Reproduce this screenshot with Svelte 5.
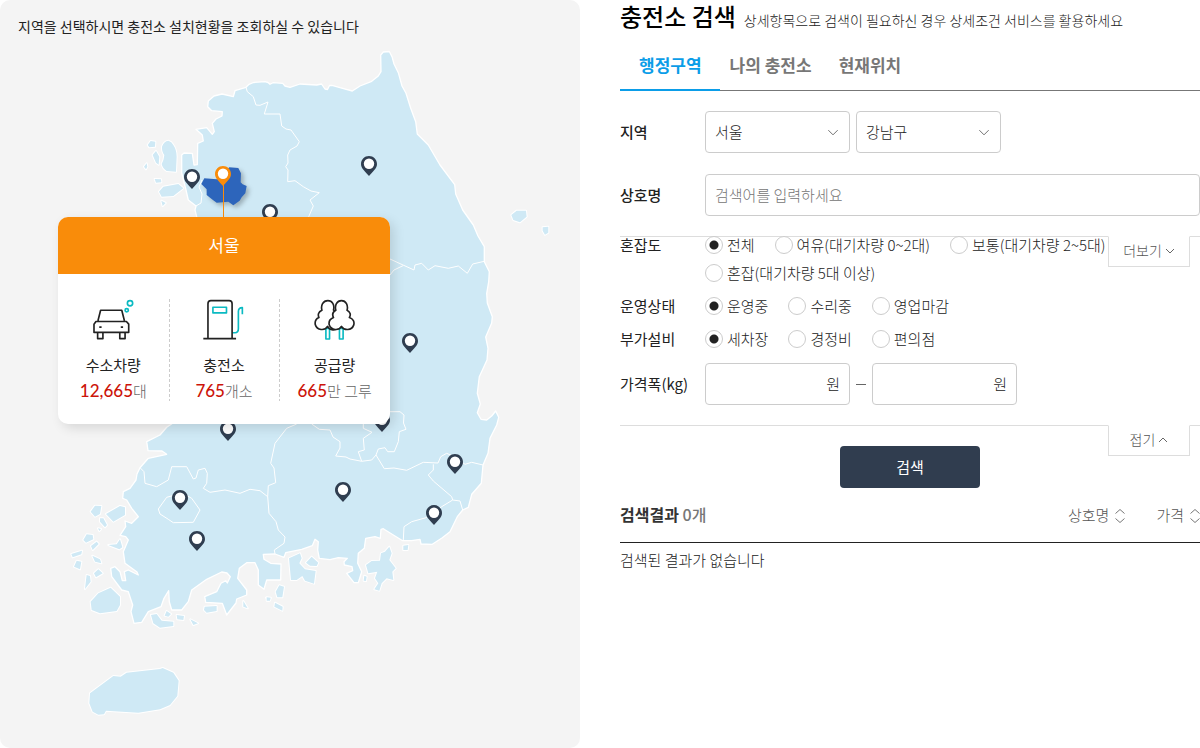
<script>
  const pins = [
    { name: '인천', x: 192, y: 169 },
    { name: '경기', x: 270, y: 204 },
    { name: '강원', x: 369, y: 156 },
    { name: '경북', x: 410, y: 333 },
    { name: '대구', x: 382, y: 412 },
    { name: '전북', x: 228, y: 421 },
    { name: '울산', x: 455, y: 454 },
    { name: '경남', x: 343, y: 482 },
    { name: '광주', x: 180, y: 490 },
    { name: '부산', x: 434, y: 505 },
    { name: '전남', x: 197, y: 531 },
    { name: '서울', x: 223, y: 166, active: true }
  ];

  const groups = [
    { key: 'crowd', label: '혼잡도', options: ['전체', '여유(대기차량 0~2대)', '보통(대기차량 2~5대)', '혼잡(대기차량 5대 이상)'] },
    { key: 'state', label: '운영상태', options: ['운영중', '수리중', '영업마감'] },
    { key: 'extra', label: '부가설비', options: ['세차장', '경정비', '편의점'] }
  ];
  let picked = $state({ crowd: '전체', state: '운영중', extra: '세차장' });

  const tabs = ['행정구역', '나의 충전소', '현재위치'];
  let tab = $state('행정구역');
</script>

{#snippet chevron(up)}
  <svg class="chev" viewBox="0 0 10 6" aria-hidden="true"><path d={up ? 'M1 5l4-4 4 4' : 'M1 1l4 4 4-4'} /></svg>
{/snippet}

{#snippet sorter()}
  <svg class="sorter" viewBox="0 0 12 16" aria-hidden="true"><path d="M1.500 5.500L6 1.500l4.500 4M1.500 10.500l4.500 4 4.500-4" /></svg>
{/snippet}

<main class="page">
  <section class="map-panel">
    <p class="guide">지역을 선택하시면 충전소 설치현황을 조회하실 수 있습니다</p>
    <div class="map">
      <svg class="korea" viewBox="0 0 580 748" aria-hidden="true">
        <g class="land">
          <path d="M246 87.300L249 84.300 253.500 82.500 265 81.700 268 82.500 270 84.300 273 82.700 282.700 83.300 285 86 290 87.300 300 84 316.700 85 321.500 84 325 89 327.500 89.500 329.500 85.500 332 85.300 340 87.700 352.300 91 360 86 371.700 81.300 378.300 76 381 71.700 380.700 55 383.300 52 389.300 51.500 392 56.700 394 64 398.300 72.700 402 86 406 93.300 410.700 108.300 415.700 121.700 417.300 134 428.300 145 440 165 454.700 184.700 455.700 194 462.700 210 473.300 225 478 236 484.300 246.700 484.300 261.700 489.300 271.700 488.700 281.700 486.700 293.300 487.300 303 492.300 316.700 491.700 323 485.700 337 488 348.300 487 360 479.300 376.700 477.300 393.300 480.300 404 477.300 412.700 481 419.300 486.700 420 491.700 416 495.700 411 498.700 417.300 496.700 425 490 438.300 488 453.300 483 465 481.300 483.300 471.700 494.300 468.300 507.300 462.700 510 457.300 516.700 450 531.700 442.300 537.700 432.300 544.300 421 544 420 539.300 411.700 540.700 402.700 540.700 393.300 535 383.300 528.700 381 529.300 380.300 538.300 375 536.700 365.700 538.300 364.300 548.300 358.300 553.300 357.700 563.300 361.700 571.700 358.300 582.700 354 582.700 346.700 573.300 352.700 570.700 352 566.700 344.300 565 344 561.700 347.300 558.300 338.300 557.700 330 559.700 319.300 558.300 317.700 550 318.300 541.700 315 539.300 312.300 545.700 301.700 549.300 285.700 552.700 284 557.300 275 554 263.300 554.300 264 559.300 270.700 563.300 281 564 280.700 580 266.700 580 264 589.300 258.300 585 258.300 570 255 562.700 246.700 562.700 239.300 568.300 237.700 578.300 246.700 590 246.700 595 236.700 599 236 603 226.700 615 222.300 603.300 205.700 602.300 204.700 596.700 216.700 591.700 221 583.300 225.700 580.700 227.300 583 230.300 576.700 227 573 221.700 572 206.700 579.300 191.700 590 188.300 601.700 181.700 610 171.700 610 169.300 601.700 168.700 590.700 164 598.300 161 606.700 148.300 611.700 141.700 622.300 134 623.300 131 611.700 132.700 605 128.300 591.700 121.700 590 111.700 576.700 110.700 568.300 115 566.700 120 571.700 122.300 580.700 125.700 580.700 124.300 571.700 128.300 570 138.300 575 137 572 125 563.300 123.300 551.700 128.300 540 125.700 536.700 120 535.300 125.700 526.700 125 521 131.700 523.300 138.300 516.700 131.700 508.300 126.700 500 122.700 498.300 123.300 491.700 130 488.300 136 480 137 474 140 467.700 148.300 458.300 166.700 454.300 162 451 148 450.700 146.700 441.700 160 435 166.700 427.300 172.700 423.300 160 400 166 330 190 240 196.700 216.700 195 210 196 206 188.300 200 186 190 181.700 173 181.700 155 184 153 192.300 153.300 194 165 197.300 164.700 197.700 143.300 203.300 141 202.300 135 196 129.300 206.700 127.700 212.300 134.300 214.300 131.700 212.300 123.300 216 119 222 116 222.300 111.700 211.700 110.700 207.700 106.700 208.300 101 214 96 222 94 233.300 96.700 235 90.700Z" />
          <path class="border" d="M246 87.300L247.300 91.700 253.300 96.700 256 105 260 105.300 268 102 264.300 114 280 114 281.700 126 286 129 291 130 299.300 141.700 297 146 290 150 287.700 155 288 163 285.700 166.700 288 170 287.700 181.700 295 180.700 303.300 186.700 311 191 319.300 192.700 310 200 313.300 206 308.700 216.700 304 230M390 259L403 265 414 270 415 265 421.700 263.300 428.300 270 435 265.700 448.300 268.300 458.300 266 467.300 273.300 472.700 264 484.300 261.300M390 275L394 270 403 265.700M380 411.700H400L404 415 403.500 423 406 429.300 399.300 431.700 398.300 441.700 394.300 451.700 387.700 451.700 385 447.700 378.300 449 376 455 371.700 460 361.700 461.300 350 459 346 457 335.700 456 340 448 340 441.700 333 437 330 430 319.300 429.300 311.700 424M361.700 461.300L358.300 451.700 364.300 450 363.300 438.300 372 432.300 363.300 428.300V424M376 455L384.300 468.700 394 468 406.700 470.300 423.300 462.300 438 463 440.700 456.700 446.700 453.300 455 457 465 464.300 471.700 462.300 483 465M433.300 464.300V470L428.300 475 433.300 481 451.700 496.700 452.700 500 460 501 462.700 510M452.700 500L441.700 506.700 426 517.700 411.700 521.700 404 526.700 403.300 540M296.700 424L286.700 428.300 275 443.300 270.700 463.300 274 468 275.700 482.700 268.300 485.700 267.700 496.700 269 513.300 276 521.700 278.300 530 285 537 284 543.300 274.300 550 275 554M140 467.700L144 471.700 145 483.300 156.700 486.700 168.300 480 171.700 466.700H186.700L193.300 479 196 478 198.300 470 205 468.300 207.300 473.300 206.700 483.300 203.300 488.300 210 492.300 225 490 240 493.300 250 489.300 260 490.700 267.700 496.700M175 495L166.700 497.300 158.300 509 160 514 168.300 519.300 173.300 522.700 193.300 522.300 200 510 191.700 498.300 184 494M202 180L199 187 202 194 201 203 196 206" />
        </g>
        <g class="isles" transform="translate(60 40) scale(.3333)">
          <path d="M263 315l9-12 14 2-1 15-17 2ZM325 302Q335 305 340 315Q350 330 350 350L348 395 320 393Q308 385 305 372Q312 360 313 345Q305 335 306 320Q312 304 325 302ZM278 345l10-12 10 17-2 24-8-6ZM260 370l-8 10 6 8 4-8ZM284 417l19 1 1 9-16 1ZM297 455l13-15 45-8 15 13-30 23-35 2ZM304 482l13 7-9 9Z" />
        </g>
        <g class="isles" transform="translate(300 40) scale(.3333)">
          <path d="M634 525l16-13h28l2 18-20 17-20-7ZM728 562l17-2v18l-10 6-7-12Z" />
        </g>
        <g class="isles" transform="translate(60 410) scale(.3333)">
          <path d="M92 305l13-18 19 1-4 24-15 8ZM138 312l42-24 15 4v23l-35 20ZM120 325h10l11 20-6 7-15-17ZM114 355l9 2-5 6ZM70 390l10-17 18 2 2 13-22 10ZM93 408l17-13 6 7-18 18ZM145 405l25-2 10-15 7 24-9 6ZM34 432l32-10-2 11-26 9ZM42 470l8-18 14 3-4 23ZM97 437l23 11 4 12-19-5ZM102 490l13-12 13 12-20 12ZM80 495l10 3 2 17-17 22 3-27ZM152 533l28 27v25l-10 18-50 7-25-10-3-25 23-25ZM273 615l17-3 15 20 35 3v13l-40 5-20-13ZM320 603l13 9-8 8-11-3ZM350 615l22 3-2 12-18-2ZM391 628l23 12-14 5ZM434 590l36-2v15l-30 5-8-8ZM550 573l13 22-13-5ZM618 563l14 2-7 8Z" />
        </g>
        <g class="isles" transform="translate(250 400) scale(.3333)">
          <path d="M88 556l14 4-5 32H82l-5-17ZM50 592l12 1-2 9H50ZM75 608l23 12-1 12-24-12ZM117 475l33-15 5 15-7 15 17 18 32 5-5 38-27-9-8-14-17 12h-17ZM168 488l17-18 20 18-5 10-20-1ZM348 495l17-12 25-1 3-22 12-5 13-15 7 20-7 20 19 25-10 10 3 25-20-5-15 15-7 22-15-4 12-18-10-15 7-20-27 5ZM343 527l7 3-2 13-7-1ZM460 437l15-2-2 15h-13Z" />
        </g>
        <g class="isles" transform="translate(60 560) scale(.3333)">
          <path d="M90 400l70-52 22 2 18-12 100-11 8-3 32 14 16 24-4 46-22 27-30 13-65 10-97-6-6 11-17 1-17-9-10-25Z" />
        </g>
        <path class="seoul" transform="translate(60 40) scale(.3333)" d="M424 432l9-17 37 3 38-36 27 2 8 16-1 27 6 6 12 5-4 22-11 12-6 10-19 14-15-11-35 3-15-11-15-12v-17Z" />
      </svg>

      {#each pins as pin}
        <button class="pin" class:active={pin.active} style="left: {pin.x}px; top: {pin.y}px" aria-label={pin.name}>
          <svg viewBox="0 0 16 20" aria-hidden="true">
            <path d="M8 0C3.600 0 0 3.500 0 7.900 0 12.500 4.500 15.500 8 20c3.500-4.500 8-7.500 8-12.100C16 3.500 12.400 0 8 0Z" />
            <circle cx="8" cy="7.700" r="5.200" />
          </svg>
        </button>
      {/each}

      <article class="card">
        <h3>서울</h3>
        <dl>
          <div>
            <svg viewBox="128 264 122 124" aria-hidden="true">
              <g class="ink"><path d="M142 330l8-32h64l8 32M136 332h92l7 8v25H130v-25ZM141 366v18h16v-18M208 366v18h16v-18M146 349h7M211 349h7" /></g>
              <g class="teal"><circle cx="239" cy="277" r="8" /><circle cx="229" cy="298" r="5" /></g>
            </svg>
            <dt>수소차량</dt>
            <dd><strong>12,665</strong>대</dd>
          </div>
          <div>
            <svg viewBox="462 264 122 124" aria-hidden="true">
              <g class="teal"><path d="M491 289h41v17h-41ZM550 366h8c8 0 10-4 10-12v-52c0-8 5-12 12-12v20" /></g>
              <g class="ink"><path d="M462 384h99M476 384V278q0-9 9-9h55q9 0 9 9v106" /></g>
            </svg>
            <dt>충전소</dt>
            <dd><strong>765</strong>개소</dd>
          </div>
          <div>
            <svg viewBox="794 264 122 124" aria-hidden="true">
              <g class="teal"><path d="M829 353h11v32h-11ZM870 353h11v32h-11Z" /></g>
              <g class="ink trees">
                <path d="M834 347c-8 14-32 12-37-5-2-10 2-18 11-22-4-8-2-17 9-22-4-14 3-29 18-29 13 0 21 13 17 28 10 5 12 14 8 23 14 5 15 21 7 31-8 9-27 9-33-4Z" />
                <path d="M876 347c-8 14-31 12-37-5-2-10 3-18 13-22-4-8-3-17 7-22-4-14 3-29 17-29 14 0 21 14 17 29 10 5 12 14 7 22 12 4 16 14 13 23-6 17-29 17-37 4Z" />
              </g>
            </svg>
            <dt>공급량</dt>
            <dd><strong>665</strong>만 그루</dd>
          </div>
        </dl>
      </article>
    </div>
  </section>

  <section class="search">
    <header>
      <h2>충전소 검색</h2>
      <p>상세항목으로 검색이 필요하신 경우 상세조건 서비스를 활용하세요</p>
    </header>
    <nav>
      {#each tabs as name}
        <button class:on={tab === name} onclick={() => (tab = name)}>{name}</button>
      {/each}
    </nav>

    <form onsubmit={(e) => e.preventDefault()}>
      <div class="basic">
        <div class="row">
          <label class="name bold" for="sido">지역</label>
          <div class="fields">
            <span class="select"><select id="sido"><option>서울</option></select>{@render chevron(false)}</span>
            <span class="select"><select aria-label="시군구"><option>강남구</option></select>{@render chevron(false)}</span>
          </div>
        </div>
        <div class="row">
          <label class="name bold" for="shop">상호명</label>
          <input id="shop" class="text" type="text" placeholder="검색어를 입력하세요" />
        </div>
      </div>

      <div class="detail">
        <button type="button" class="flap">더보기 {@render chevron(false)}</button>
        {#each groups as group}
          <fieldset class={group.key}>
            <legend class="name">{group.label}</legend>
            <div class="options">
              {#each group.options as option}
                <label><input type="radio" name={group.key} value={option} bind:group={picked[group.key]} />{option}</label>
              {/each}
            </div>
          </fieldset>
        {/each}
        <div class="row price">
          <label class="name" for="low">가격폭(kg)</label>
          <div class="fields">
            <span class="won"><input id="low" type="text" />원</span>
            <span class="dash"></span>
            <span class="won"><input type="text" aria-label="최고 가격" />원</span>
          </div>
        </div>
      </div>

      <div class="submit">
        <button type="button" class="flap">접기 {@render chevron(true)}</button>
        <button class="go">검색</button>
      </div>
    </form>

    <div class="result-head">
      <h3>검색결과 <span>0개</span></h3>
      <div class="sorts">
        <button>상호명 {@render sorter()}</button>
        <button>가격 {@render sorter()}</button>
      </div>
    </div>
    <p class="empty">검색된 결과가 없습니다</p>
  </section>
</main>

<style>
  :global(body) {
    margin: 0;
    background: #fff;
    overflow-x: hidden;
  }
  .page,
  .page button,
  .page input,
  .page select {
    font-family: 'Noto Sans CJK KR', sans-serif;
    font-size: 15px;
    font-weight: 300;
    color: #222;
  }
  .page * {
    box-sizing: border-box;
  }
  .page {
    display: flex;
    gap: 40px;
    min-height: 100vh;
    line-height: 20px;
  }
  h2, h3, p, dl, dd {
    margin: 0;
  }
  button {
    border: 0;
    padding: 0;
    background: none;
    cursor: pointer;
  }
  .map-panel,
  .search {
    flex: 1 1 0;
    min-width: 0;
  }

  .map-panel {
    position: relative;
    background: #f4f4f4;
    border-radius: 10px;
    overflow: hidden;
  }
  .guide {
    position: absolute;
    left: 18px;
    top: 16px;
    font-size: 14px;
    font-weight: 400;
  }
  .map {
    position: relative;
    width: 580px;
    margin: 0 auto;
  }
  .korea {
    display: block;
    width: 100%;
  }
  .land path,
  .isles path {
    fill: #cfe9f5;
    stroke: #fff;
    stroke-width: 1.3;
    stroke-linejoin: round;
  }
  .land .border {
    fill: none;
    stroke-width: 1;
  }
  .isles path {
    stroke-width: 6;
    paint-order: stroke;
  }
  .seoul {
    fill: #2d65bb;
    filter: drop-shadow(8px 8px 6px rgba(0, 0, 0, 0.25));
  }
  .pin {
    position: absolute;
    width: 16px;
    height: 20px;
    margin-left: -8px;
  }
  .pin svg {
    display: block;
    width: 16px;
    height: 20px;
    fill: #303e50;
  }
  .pin circle {
    fill: #fff;
  }
  .pin.active svg {
    fill: #f98c0a;
  }
  .pin.active::after {
    content: '';
    position: absolute;
    left: 8px;
    top: 18px;
    width: 1px;
    height: 34px;
    background: #f98c0a;
  }

  .card {
    position: absolute;
    left: 58px;
    top: 217px;
    width: 332px;
    background: #fff;
    border-radius: 10px;
    overflow: hidden;
    box-shadow: 4px 4px 12px rgba(0, 0, 0, 0.12);
  }
  .card h3 {
    padding: 15px 0 17px;
    background: #f98c0a;
    color: #fff;
    font-size: 17px;
    line-height: 25px;
    font-weight: 400;
    text-align: center;
  }
  .card dl {
    display: grid;
    grid-template-columns: repeat(3, 1fr);
    padding: 25px 0 23px;
  }
  .card dl div {
    text-align: center;
  }
  .card dl div + div {
    background: repeating-linear-gradient(#ccc 0 3px, transparent 3px 5px) left / 1px 100% no-repeat;
  }
  .card svg {
    width: 41px;
    height: 41px;
    margin-bottom: 15px;
    display: block;
    margin-inline: auto;
    fill: none;
    stroke-width: 5;
    stroke-linejoin: round;
  }
  .ink { stroke: #222; }
  .teal { stroke: #0bbac2; }
  .trees { fill: #fff; }
  dt {
    font-weight: 400;
  }
  dd {
    margin-top: 5px;
    line-height: 21px;
    color: #666;
  }
  dd strong {
    font-family: Lato, sans-serif;
    font-size: 17px;
    font-weight: 500;
    color: #cc1409;
  }

  .search header {
    display: flex;
    align-items: baseline;
    gap: 8px;
    white-space: nowrap;
    height: 40px;
  }
  .search h2 {
    font-size: 24px;
    line-height: 32px;
    font-weight: 500;
    color: #000;
  }
  .search header p {
    font-size: 14px;
  }
  nav {
    display: flex;
    height: 51px;
    border-bottom: 1px solid #777;
  }
  .page nav button {
    height: 51px;
    padding: 0 17px 0 10px;
    border-bottom: 2px solid transparent;
    font-size: 17px;
    font-weight: 700;
    color: #777;
  }
  .page nav button.on {
    padding: 0 18px 0 19px;
    border-color: #0b9de8;
    color: #0b9de8;
  }
  .basic {
    display: grid;
    gap: 21px;
    padding: 20px 0;
  }
  .row,
  .fields {
    display: flex;
    align-items: center;
  }
  .name {
    flex: none;
    width: 85px;
    padding: 0;
    font-weight: 400;
  }
  .bold {
    font-weight: 500;
  }
  .fields {
    gap: 6px;
  }
  .select,
  .won {
    position: relative;
    width: 145px;
    height: 42px;
    border: 1px solid #ccc;
    border-radius: 4px;
  }
  .select select {
    width: 100%;
    height: 100%;
    padding: 0 9px 2px;
    border: 0;
    background: transparent;
    appearance: none;
  }
  .chev {
    width: 10px;
    height: 6px;
    fill: none;
    stroke: #666;
    stroke-width: 1;
  }
  .select .chev {
    position: absolute;
    right: 10px;
    top: 17px;
    width: 12px;
    height: 7px;
    stroke-width: 0.8;
    pointer-events: none;
  }
  .text {
    flex: 1;
    min-width: 0;
    height: 42px;
    padding: 0 9px 2px;
    border: 1px solid #ccc;
    border-radius: 4px;
  }
  .text::placeholder {
    color: #757575;
    opacity: 1;
  }
  .detail {
    position: relative;
    border-top: 1px solid #ddd;
    padding-bottom: 20px;
  }
  .page .flap {
    position: absolute;
    right: 10px;
    top: -1px;
    width: 82px;
    height: 31px;
    padding-bottom: 3px;
    border: 1px solid #ddd;
    border-top-color: #fff;
    background: #fff;
    font-size: 14px;
    font-weight: 300;
    color: #555;
  }
  .flap .chev {
    margin-bottom: 2px;
  }
  fieldset {
    display: flex;
    margin: 0 0 5px;
    padding: 0;
    border: 0;
    line-height: 28px;
  }
  fieldset.crowd {
    margin-top: -6px;
  }
  legend {
    float: left;
  }
  .options {
    flex: 1;
    display: flex;
    flex-wrap: wrap;
    column-gap: 20px;
  }
  .options label {
    display: flex;
    align-items: center;
    gap: 4px;
    white-space: nowrap;
  }
  .options input {
    flex: none;
    width: 18px;
    height: 18px;
    margin: 0;
    border: 1px solid #ccc;
    border-radius: 50%;
    appearance: none;
    background: #fff;
  }
  .options input:checked {
    background: radial-gradient(circle, #222 4px, #fff 5px);
  }
  .price {
    padding-top: 5px;
  }
  .won {
    display: flex;
    align-items: center;
    padding-right: 9px;
  }
  .won input {
    flex: 1;
    min-width: 0;
    height: 100%;
    border: 0;
    background: transparent;
  }
  .dash {
    width: 10px;
    height: 1px;
    background: #666;
  }
  .submit {
    position: relative;
    display: flex;
    justify-content: center;
    padding: 20px 0;
    border-top: 1px solid #ddd;
  }
  .page .go {
    width: 140px;
    height: 42px;
    padding-bottom: 2px;
    border-radius: 4px;
    background: #303d4f;
    color: #fff;
    font-weight: 400;
  }
  .result-head {
    display: flex;
    justify-content: space-between;
    align-items: flex-start;
    height: 35px;
    border-bottom: 1px solid #222;
  }
  .result-head h3 {
    margin-top: -4px;
    font-size: 16px;
    font-weight: 700;
    color: #333;
  }
  .result-head span {
    font-weight: 500;
    color: #777;
  }
  .sorts {
    display: flex;
    gap: 30px;
    margin-top: -3px;
    margin-right: -1px;
  }
  .page .sorts button {
    display: flex;
    align-items: center;
    gap: 5px;
    line-height: 20px;
    font-weight: 300;
    color: #555;
  }
  .sorter {
    width: 12px;
    height: 16px;
    margin-top: 2px;
    fill: none;
    stroke: #777;
  }
  .empty {
    padding-top: 7px;
  }
</style>
